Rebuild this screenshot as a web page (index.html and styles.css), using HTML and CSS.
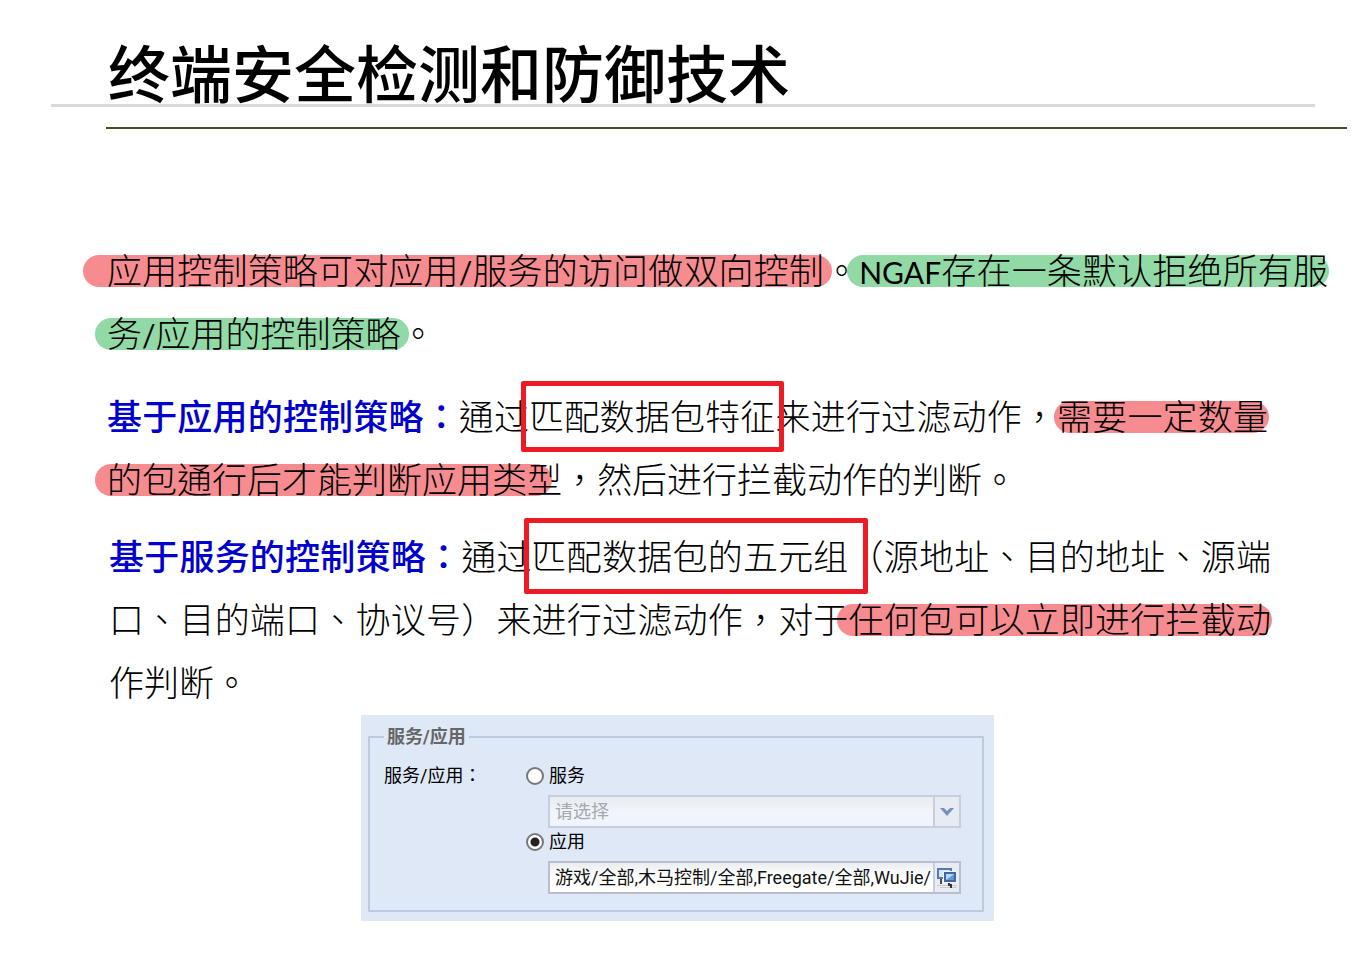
FILE: index.html
```html
<!DOCTYPE html>
<html lang="zh-CN">
<head>
    <meta charset="UTF-8">
    <meta name="viewport" content="width=device-width, initial-scale=1.0">
    <title>终端安全检测和防御技术</title>
    <link rel="stylesheet" href="styles.css">
</head>
<body>
    <header class="slide-header">
        <h1>终端安全检测和防御技术</h1>
    </header>

    <main>
        <div class="slide-text" lang="zh-TW">
            <p class="intro"><span class="mark red wide-left">应用控制策略可对应用<span class="latin">/</span>服务的访问做双向控制</span>。<span class="mark green mid-left flush-right"><span class="latin">NGAF</span>存在一条默认拒绝所有服</span><span class="mark green mid-left">务<span class="latin">/</span>应用的控制策略</span>。</p>

            <p class="by-app"><strong>基于应用的控制策略：</strong>通过<span class="frame">匹配数据包特征</span>来进行过滤动作，<span class="mark red flush-left flush-right">需要一定数量</span><span class="mark red mid-left short-right">的包通行后才能判断应用类型</span>，然后进行拦截动作的判断。</p>

            <p class="by-service"><strong>基于服务的控制策略：</strong>通过<span class="frame frame-wide">匹配数据包的五元组</span>（源地址、目的地址、源端口、目的端口、协议号）来进行过滤动作，对于<span class="mark red mid-left flush-right">任何包可以立即进行拦截动</span>作判断。</p>
        </div>

        <form class="panel">
            <fieldset>
                <legend>服务/应用</legend>
                <div class="form-row">
                    <span class="row-label" lang="zh-TW">服务/应用：</span>
                    <div class="options">
                        <label class="option"><input type="radio" name="type" value="service">服务</label>
                        <div class="field field-off">
                            <select aria-label="服务" disabled>
                                <option>请选择</option>
                            </select>
                            <span class="trigger">
                                <svg width="14" height="10" viewBox="0 0 14 10"><path d="M0 1h4l3 3 3-3h4L7 9z" fill="#7590bd"/></svg>
                            </span>
                        </div>
                        <label class="option"><input type="radio" name="type" value="app" checked>应用</label>
                        <div class="field">
                            <input type="text" aria-label="应用" value="游戏/全部,木马控制/全部,Freegate/全部,WuJie/">
                            <button type="button" class="trigger" aria-label="选择应用">
                                <svg width="20" height="22" viewBox="0 0 20 22">
                                    <path d="M0 18.500h20M3 20.500h17" stroke="#c5c9d6"/>
                                    <path d="M4 12v5" stroke="#4b4b50" stroke-width="2"/>
                                    <rect x="1" y="2" width="13" height="9" fill="#d5e7fa" stroke="#5876b1" stroke-width="2"/>
                                    <path d="M12 15v3h2v3" fill="none" stroke="#333" stroke-width="2"/>
                                    <rect x="6" y="4" width="14" height="12" fill="#eef3fa"/>
                                    <rect x="8" y="6" width="10" height="8" fill="#5b9ae0" stroke="#45659f" stroke-width="2"/>
                                    <path d="M9 7h8l-8 6z" fill="#b9d8f8"/>
                                </svg>
                            </button>
                        </div>
                    </div>
                </div>
            </fieldset>
        </form>
    </main>
</body>
</html>
```

FILE: styles.css
```css
* {
    margin: 0;
    padding: 0;
    box-sizing: border-box;
}

body {
    background: #fff;
    color: #000;
    font-family: "Noto Sans CJK SC", sans-serif;
}

main {
    padding-right: 8px;
}

/* title with its two rules */
.slide-header {
    padding: 44px 16px 0 51px;
}

h1 {
    padding: 0 0 6px 57px;
    margin-right: 32px;
    border-bottom: 3px solid #dadada;
    font-size: 62px;
    font-weight: 500;
    line-height: 54px;
}

.slide-header::after {
    content: "";
    display: block;
    margin: 20px 0 0 55px;
    border-top: 2px solid #51452b;
}

.slide-text {
    padding: 108px 27px 3px 107px;
    font-family: "Noto Sans CJK TC", sans-serif;
    font-size: 35px;
    font-weight: 300;
    line-height: 63px;
    text-align: justify;
}

.by-app {
    margin: 20px 60px 0 0;
}

.by-service {
    margin: 14px 57px 0 2px;
}

strong {
    color: #0000cd;
    font-weight: 500;
}

.latin {
    font-family: Lato, sans-serif;
    font-size: 30px;
    font-weight: 400;
    line-height: 1;
}

/* highlighter strokes */
.mark {
    position: relative;
}

.mark::before {
    content: "";
    position: absolute;
    z-index: -1;
    top: 12px;
    bottom: 7px;
    left: -12px;
    right: -8px;
    border-radius: 16px;
}

.red::before {
    background: #f68c8f;
}

.green::before {
    background: #91d9a5;
}

.wide-left::before {
    left: -24px;
}

.flush-left::before {
    left: -3px;
}

.flush-right::before {
    right: -1px;
}

.short-right::before {
    right: 10px;
}

.frame {
    position: relative;
}

.frame::after {
    content: "";
    position: absolute;
    top: -8px;
    bottom: -12px;
    left: -8px;
    right: -8px;
    border: 5px solid #ed1c24;
    border-radius: 2px;
}

.frame-wide::after {
    top: -11px;
    bottom: -14px;
    right: -19px;
}

/* settings panel */
.panel {
    width: calc(100% - 40px);
    max-width: 633px;
    margin: 0 auto;
    padding: 11px 10px 9px 7px;
    background: #dee8f7;
    font-family: Roboto, "Noto Sans CJK SC", sans-serif;
    font-size: 18px;
    line-height: 22px;
}

fieldset {
    padding: 17px 21px 13px 14px;
    border: 2px solid #bccbdf;
}

legend {
    padding: 0 3px;
    color: #666;
    font-weight: 700;
}

.form-row {
    display: flex;
}

.row-label {
    width: 142px;
    flex-shrink: 0;
    font-family: Roboto, "Noto Sans CJK TC", sans-serif;
}

.options {
    flex: 1;
    min-width: 0;
}

.option {
    display: flex;
    align-items: center;
    gap: 5px;
}

.option input {
    appearance: none;
    width: 18px;
    height: 18px;
    border: 2px solid #777;
    border-radius: 50%;
    background: #fff;
}

.option input:checked {
    background: radial-gradient(circle, #222 0 4px, #fff 5px);
}

.field {
    display: flex;
    height: 33px;
    margin: 8px 0 3px 22px;
    border: 2px solid #b9bfd0;
    background: linear-gradient(#eaeeef, #fff 50%);
}

.field-off {
    border-color: #c8cde0;
    background: linear-gradient(#e6ecf0, #f1f5fb 50%);
}

.field input,
.field select {
    appearance: none;
    flex: 1;
    min-width: 0;
    padding-left: 5px;
    border: none;
    background: none;
    color: #111;
    font: inherit;
    opacity: 1;
}

.field select {
    color: #a5a8ad;
}

.trigger {
    display: flex;
    align-items: center;
    justify-content: center;
    width: 26px;
    border: none;
    border-left: 2px solid #c8cde0;
    background: #e8ebf1;
}
```
